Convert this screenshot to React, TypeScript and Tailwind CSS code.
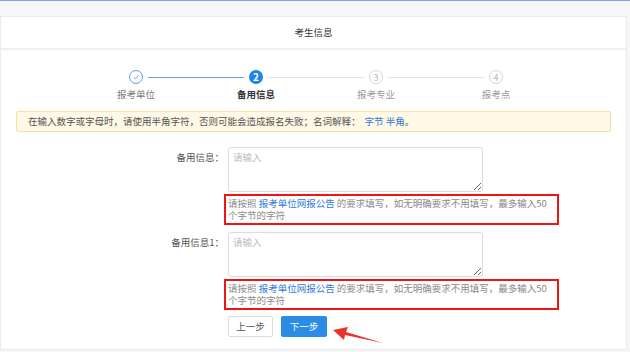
import React from 'react'

const steps = [
    { label: '报考单位', state: 'done' },
    { label: '备用信息', state: 'active' },
    { label: '报考专业', state: 'todo' },
    { label: '报考点', state: 'todo' },
]

function StepCircle({ state, n }: { state: string; n: number }) {
    if (state === 'done') {
        return (
            <div className="w-[14px] h-[14px] rounded-full border border-[#5c9ee8] bg-white flex items-center justify-center">
                <svg width="8" height="8" viewBox="0 0 8 8" fill="none">
                    <path d="M1.5 4.2 L3.3 5.8 L6.5 2.3" stroke="#5c9ee8" strokeWidth="0.9" />
                </svg>
            </div>
        )
    }
    if (state === 'active') {
        return (
            <div className="w-[14px] h-[14px] rounded-full bg-[#1f86e0] flex items-center justify-center text-white text-[10px] font-bold leading-none">
                {n}
            </div>
        )
    }
    return (
        <div className="w-[14px] h-[14px] rounded-full border border-[#d4d4d4] bg-white flex items-center justify-center text-[#b8b8b8] text-[9px] leading-none">
            {n}
        </div>
    )
}

function Hint() {
    return (
        <div className="mt-[2px] ml-[-4px] w-[335px] border-2 border-[#ee1515] pl-[2px] pt-[1px] pb-[2px] text-[9.5px] leading-[12px] text-[#8a8a8a]">
            <div>
                请按照 <span className="text-[#2f7ad6]">报考单位网报公告</span> 的要求填写，如无明确要求不用填写，最多输入50
            </div>
            <div>个字节的字符</div>
        </div>
    )
}

function Field({ label }: { label: string }) {
    return (
        <div className="flex">
            <div className="w-[223px] text-right pt-[5px] text-[9.5px] leading-[10px] text-[#555]">{label}</div>
            <div className="ml-[4px]">
                <textarea
                    placeholder="请输入"
                    className="block w-[255px] h-[45px] border border-[#dcdcdc] rounded-[3px] px-[4px] py-[3px] text-[9.5px] leading-[12px] placeholder:text-[#bdbdbd] outline-none"
                />
                <Hint />
            </div>
        </div>
    )
}

export default function App() {
    return (
        <div className="relative w-[630px] h-[352px] overflow-hidden bg-[#f6f6f6] border-t border-[#74a7ea] font-['Noto_Sans_CJK_SC',sans-serif]">
            <div className="mt-[15px] w-[627px] h-[334px] bg-white border border-[#ebebeb]">
                <div className="h-[33px] flex items-center justify-center border-b-2 border-[#efefef] text-[9.5px] text-[#333]">
                    考生信息
                </div>

                {/* steps */}
                <div className="pt-[20px]">
                    <div className="flex items-center ml-[128px]">
                        {steps.map((s, i) => (
                            <React.Fragment key={s.label}>
                                <StepCircle state={s.state} n={i + 1} />
                                {i < steps.length - 1 && (
                                    <div
                                        className={
                                            i === 0
                                                ? 'w-[96px] mx-[5px] h-px bg-[#6fa3e6]'
                                                : 'w-[96px] mx-[5px] h-px bg-[#e4e4e4]'
                                        }
                                    />
                                )}
                            </React.Fragment>
                        ))}
                    </div>
                    <div className="grid grid-cols-4 w-[480px] ml-[75px] mt-[5px]">
                        {steps.map((s) => (
                            <div
                                key={s.label}
                                className={
                                    s.state === 'active'
                                        ? 'text-center text-[9.5px] leading-[10px] font-bold text-[#333]'
                                        : s.state === 'done'
                                          ? 'text-center text-[9.5px] leading-[10px] text-[#777]'
                                          : 'text-center text-[9.5px] leading-[10px] text-[#999]'
                                }
                            >
                                {s.label}
                            </div>
                        ))}
                    </div>
                </div>

                {/* warning */}
                <div className="mt-[12px] mx-[15px] h-[21px] flex items-center pl-[11px] bg-[#fef8e6] border border-[#f9e1a3] rounded-[2px] text-[9.5px] text-[#555]">
                    在输入数字或字母时，请使用半角字符，否则可能会造成报名失败；名词解释：
                    <span className="text-[#2f7ad6] ml-[4px]">字节 半角</span>。
                </div>

                <div className="mt-[15px] flex flex-col gap-[7px]">
                    <Field label="备用信息：" />
                    <Field label="备用信息1：" />
                </div>

                <div className="flex gap-[8px] ml-[227px] mt-[6px]">
                    <button className="w-[45px] h-[21px] border border-[#dcdcdc] rounded-[2px] bg-white text-[9.5px] text-[#555]">
                        上一步
                    </button>
                    <button className="w-[46px] h-[21px] rounded-[2px] bg-[#2b8ce6] text-[9.5px] text-white">
                        下一步
                    </button>
                </div>
            </div>

            {/* annotation arrow */}
            <svg className="absolute left-[330px] top-[322px]" width="56" height="24" viewBox="0 0 56 24">
                <polygon points="3,7 18,4 16,9 53,20 15,12 14,17" fill="#e8322e" />
            </svg>
        </div>
    )
}
